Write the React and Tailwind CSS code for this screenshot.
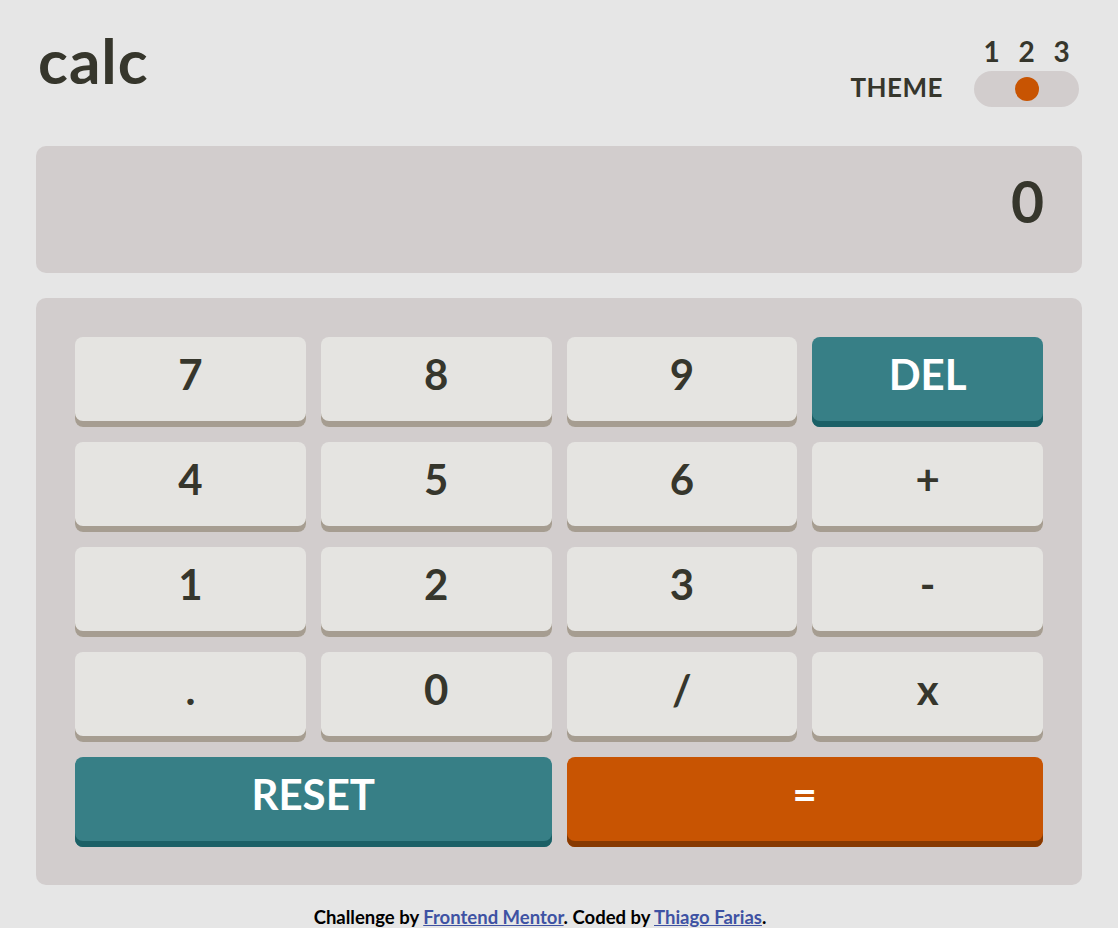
const keys = [
  { label: '7' },
  { label: '8' },
  { label: '9' },
  { label: 'DEL', kind: 'accent' },
  { label: '4' },
  { label: '5' },
  { label: '6' },
  { label: '+' },
  { label: '1' },
  { label: '2' },
  { label: '3' },
  { label: '-' },
  { label: '.' },
  { label: '0' },
  { label: '/' },
  { label: 'x' },
];

const Key = ({ label, kind, wide }) => {
  const styles =
    kind === 'accent'
      ? 'bg-[#377f86] shadow-[inset_0_-6px_0_#1b6066] text-white'
      : kind === 'equal'
        ? 'bg-[#c85402] shadow-[inset_0_-6px_0_#873901] text-white'
        : 'bg-[#e5e4e1] shadow-[inset_0_-6px_0_#a69d91] text-[#36362c]';

  return (
    <button
      className={`h-[90px] rounded-[8px] flex items-start justify-center pt-[16px] text-[42px] font-bold leading-none ${styles} ${wide ? 'col-span-2' : ''}`}
    >
      {label}
    </button>
  );
};

export default function App() {
  return (
    <div
      className="min-h-screen bg-[#e6e6e6] px-[36px] text-[#36362c]"
      style={{ fontFamily: 'Lato, "Noto Sans", sans-serif' }}
    >
      {/* Header */}
      <header className="h-[146px] flex justify-between items-start pt-[29px]">
        <h1 className="ml-[2px] text-[62px] font-bold leading-none tracking-[1px]">calc</h1>

        <div className="mt-[8px] mr-[3px] flex items-end gap-[31px]">
          <span className="mb-[7px] text-[26px] font-bold leading-none tracking-[0.5px]">THEME</span>
          <div className="flex flex-col">
            <div className="grid grid-cols-3 w-[105px] text-[28px] font-bold leading-none text-center">
              <span>1</span>
              <span>2</span>
              <span>3</span>
            </div>
            <div className="mt-[6px] w-[105px] h-[36px] rounded-full bg-[#d2cdcd] grid grid-cols-3 items-center">
              <span />
              <span className="justify-self-center w-[24px] h-[24px] rounded-full bg-[#c85402]" />
              <span />
            </div>
          </div>
        </div>
      </header>

      {/* Display */}
      <div className="h-[127px] rounded-[10px] bg-[#d2cdcd] pt-[27px] pr-[38px] text-right text-[57px] font-bold leading-none">
        0
      </div>

      {/* Keypad */}
      <div className="mt-[25px] rounded-[10px] bg-[#d2cdcd] pt-[39px] pb-[38px] px-[39px] grid grid-cols-4 gap-[15px]">
        {keys.map((k) => (
          <Key key={k.label} {...k} />
        ))}
        <Key label="RESET" kind="accent" wide />
        <Key label="=" kind="equal" wide />
      </div>

      {/* Footer */}
      <p className="mt-[23px] pr-[38px] pb-4 text-center text-[18.5px] font-bold leading-none text-black">
        Challenge by{' '}
        <a href="#" className="text-[#3e52a3] underline">Frontend Mentor</a>. Coded by{' '}
        <a href="#" className="text-[#3e52a3] underline">Thiago Farias</a>.
      </p>
    </div>
  );
}
